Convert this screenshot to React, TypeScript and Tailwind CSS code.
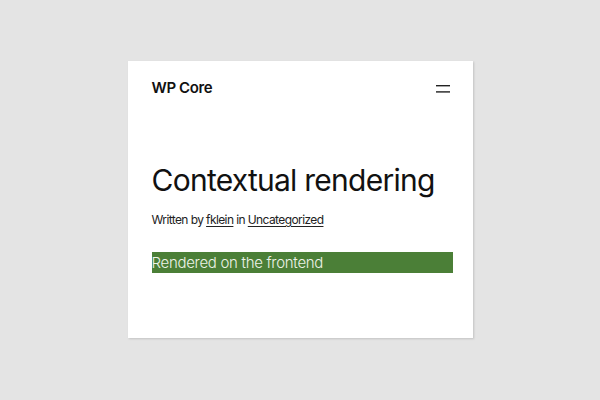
export default function App() {
  return (
    <div className="w-[600px] h-[400px] bg-[#e4e4e4] flex items-start justify-center pt-[61px]" style={{ fontFamily: "Inter, 'Liberation Sans', sans-serif" }}>
      <div className="w-[345px] h-[277px] bg-white shadow-[1px_1px_2px_rgba(0,0,0,0.15)] flex flex-col pl-6 pr-5">
        <div className="flex items-center justify-between h-[54px] pt-[1px]">
          <span className="text-[15px] font-semibold tracking-[-0.4px] text-[#111]">WP Core</span>
          <svg width="16" height="10" viewBox="0 0 16 10" className="mr-[1px]">
            <rect x="0" y="1" width="14" height="1.4" fill="#222" />
            <rect x="0" y="7.2" width="14" height="1.4" fill="#222" />
          </svg>
        </div>
        <h1 className="mt-[45px] text-[30px] leading-[40px] font-normal tracking-[-0.75px] text-[#111] whitespace-nowrap">Contextual rendering</h1>
        <p className="mt-[12px] text-[12px] leading-[16px] tracking-[-0.6px] text-[#222]">
          Written by <a className="underline underline-offset-2">fklein</a> in <a className="underline underline-offset-2">Uncategorized</a>
        </p>
        <div className="mt-[24px] h-[21px] bg-[#4b7f37] text-[#edf3e8] text-[15px] font-light leading-[21px] tracking-[-0.3px] whitespace-nowrap">Rendered on the frontend</div>
      </div>
    </div>
  );
}
